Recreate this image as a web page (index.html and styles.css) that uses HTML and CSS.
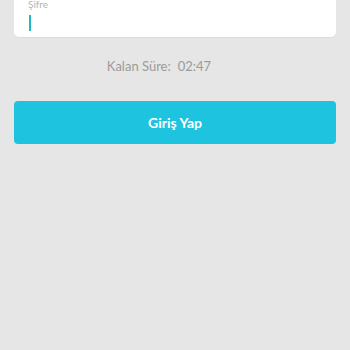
FILE: index.html
```html
<!DOCTYPE html>
<html lang="tr">
<head>
<meta charset="utf-8">
<link rel="stylesheet" href="styles.css">
</head>
<body>
<div class="page">
  <div class="card">
    <div class="label">Şifre</div>
    <div class="input"><span class="caret"></span></div>
  </div>
  <div class="timer"><span>Kalan Süre:</span><span>02:47</span></div>
  <button class="btn">Giriş Yap</button>
</div>
</body>
</html>
```
FILE: styles.css
```css
html, body {
  margin: 0;
  padding: 0;
  background: #e6e6e6;
  height: 100%;
}
.page {
  padding: 0 14px;
  font-family: Lato, "Open Sans", sans-serif;
}
.card {
  background: #ffffff;
  border-radius: 0 0 5px 5px;
  margin-top: -1px;
  padding: 0 14px;
  box-shadow: 0 1px 1px rgba(0,0,0,0.04);
}
.label {
  font-size: 10px;
  line-height: 11px;
  color: #b3b3b3;
}
.input {
  box-sizing: border-box;
  height: 27px;
  padding-top: 5px;
  display: flex;
  align-items: flex-start;
}
.caret {
  display: block;
  width: 2px;
  height: 16px;
  background: #1fb6c9;
  margin-left: 1px;
}
.timer {
  margin-top: 19px;
  display: flex;
  justify-content: center;
  gap: 7px;
  font-size: 13px;
  line-height: 20px;
  color: #9b9b9b;
  padding-right: 32px;
}
.btn {
  display: block;
  width: 100%;
  margin-top: 25px;
  height: 43px;
  border: none;
  border-radius: 4px;
  background: #1ec3df;
  color: #ffffff;
  font-family: Lato, "Open Sans", sans-serif;
  font-weight: 700;
  font-size: 14px;
}
```
